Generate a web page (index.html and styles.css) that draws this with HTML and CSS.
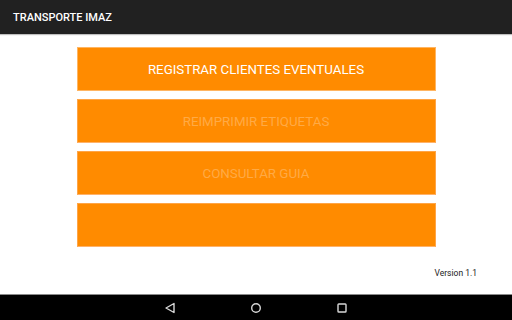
FILE: index.html
```html
<!DOCTYPE html>
<html>
<head>
<meta charset="utf-8">
<link rel="stylesheet" href="styles.css">
</head>
<body>
<div class="screen">
  <header class="appbar">TRANSPORTE IMAZ</header>
  <main class="content">
    <div class="buttons">
      <div class="btn">REGISTRAR CLIENTES EVENTUALES</div>
      <div class="btn disabled">REIMPRIMIR ETIQUETAS</div>
      <div class="btn disabled">CONSULTAR GUIA</div>
      <div class="btn disabled"></div>
    </div>
    <div class="version">Version 1.1</div>
  </main>
  <nav class="navbar">
    <svg class="nav-icon" width="14" height="14" viewBox="0 0 14 14"><path d="M11 2.5 L3 7 L11 11.5 Z" fill="none" stroke="#d8d8d8" stroke-width="1.4" stroke-linejoin="round"/></svg>
    <svg class="nav-icon" width="14" height="14" viewBox="0 0 14 14"><circle cx="7" cy="7" r="4.3" fill="none" stroke="#d8d8d8" stroke-width="1.4"/></svg>
    <svg class="nav-icon" width="14" height="14" viewBox="0 0 14 14"><rect x="3" y="3" width="8" height="8" rx="0.8" fill="none" stroke="#d8d8d8" stroke-width="1.4"/></svg>
  </nav>
</div>
</body>
</html>
```
FILE: styles.css
```css
* { box-sizing: border-box; }
html, body { margin: 0; padding: 0; }
body {
  width: 512px;
  height: 320px;
  overflow: hidden;
  font-family: Roboto, "Liberation Sans", sans-serif;
  background: #fff;
}
.screen {
  display: flex;
  flex-direction: column;
  height: 320px;
}
.appbar {
  height: 34px;
  background: #212121;
  color: #fff;
  font-weight: 500;
  font-size: 11px;
  padding: 11px 0 0 13px;
  box-shadow: 0 1px 1px rgba(0,0,0,0.25);
  position: relative;
  z-index: 1;
}
.content {
  flex: 1;
  display: flex;
  flex-direction: column;
  padding-top: 13px;
}
.buttons {
  display: flex;
  flex-direction: column;
  gap: 8px;
  align-items: center;
}
.btn {
  width: 359px;
  height: 44px;
  background: #ff8b00;
  border: 1px solid #ffb562;
  color: #fff;
  font-size: 13.3px;
  display: flex;
  align-items: center;
  justify-content: center;
}
.btn.disabled {
  color: #ffaa45;
  border-color: #ffa547;
  border-bottom-color: #ffb26a;
}
.version {
  margin-top: 21px;
  align-self: flex-end;
  margin-right: 35px;
  font-size: 8.5px;
  color: #222;
}
.navbar {
  height: 26px;
  background: #000;
  border-top: 1px solid #8a8a8a;
  display: flex;
  justify-content: center;
  align-items: center;
  gap: 72px;
}
.nav-icon { display: block; }
```
